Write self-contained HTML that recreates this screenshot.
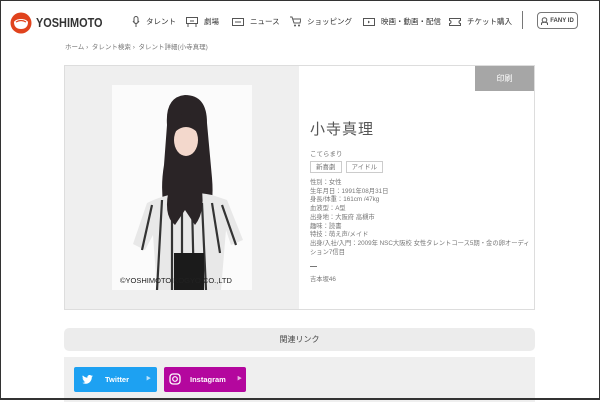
<!DOCTYPE html><html><head><meta charset="utf-8"><style>
*{margin:0;padding:0;box-sizing:border-box}
body{width:600px;height:400px;overflow:hidden;background:#fff;font-family:"Liberation Sans","Noto Sans CJK JP",sans-serif;color:#333;position:relative}
.frame{position:absolute;inset:0;border:1px solid #333;border-bottom:2px solid #333;z-index:9;pointer-events:none}
.a{position:absolute}
.nav{font-size:7.5px;color:#333;display:flex;align-items:center;gap:3px}
.nav svg{margin-right:3px}
.bc{font-size:6.5px;color:#777}
.tag{border:1px solid #ccc;font-size:6.5px;color:#777;padding:0 5px;height:12px;line-height:11px;display:inline-block;margin-right:4px;vertical-align:top}
.info{font-size:6.3px;color:#777;line-height:8.7px}
</style></head><body>
<div class="frame"></div>
<svg class="a" style="left:10px;top:12px" width="22" height="22" viewBox="0 0 22 22"><circle cx="11" cy="11" r="10.5" fill="#e0431d"/><path d="M4 10c2-4 12-4 14 0 0 5-3 7-7 7s-7-2-7-7z" fill="#fff"/><path d="M6 10q5-3 10 0" stroke="#e0431d" stroke-width="1.3" fill="none"/></svg>
<div class="a" style="left:36px;top:15px;font-size:13px;font-weight:bold;color:#333;transform:scaleX(0.84);transform-origin:left top">YOSHIMOTO</div>
<div class="a nav" style="left:132px;top:16px"><svg width="8" height="11"><rect x="2" y="0.5" width="4" height="7" rx="2" fill="none" stroke="#555"/><path d="M1 5q3 5 6 0M4 8v3" stroke="#555" fill="none"/></svg>タレント</div>
<div class="a nav" style="left:186px;top:16px"><svg width="12" height="10"><rect x="0.5" y="0.5" width="11" height="6" fill="none" stroke="#555"/><path d="M2 7v3M10 7v3M4 4h4" stroke="#555"/></svg>劇場</div>
<div class="a nav" style="left:232px;top:16px"><svg width="12" height="10"><rect x="0.5" y="1.5" width="11" height="7" fill="none" stroke="#555"/><path d="M3 5h6" stroke="#555"/></svg>ニュース</div>
<div class="a nav" style="left:290px;top:16px"><svg width="11" height="11"><path d="M0 1h2l2 6h6l1-4H3" stroke="#555" fill="none"/><circle cx="5" cy="9.5" r="1" fill="#555"/><circle cx="9" cy="9.5" r="1" fill="#555"/></svg>ショッピング</div>
<div class="a nav" style="left:363px;top:16px"><svg width="12" height="10"><rect x="0.5" y="1.5" width="11" height="7" fill="none" stroke="#555"/><path d="M5 3.5l2 1.5-2 1.5z" fill="#555"/></svg>映画・動画・配信</div>
<div class="a nav" style="left:449px;top:16px"><svg width="12" height="10"><path d="M0.5 1.5h11v2a1.5 1.5 0 0 0 0 3v2h-11v-2a1.5 1.5 0 0 0 0-3z" fill="none" stroke="#555"/></svg>チケット購入</div>
<div class="a" style="left:522px;top:11px;width:1px;height:18px;background:#777"></div>
<div class="a" style="left:537px;top:12px;width:41px;height:17px;border:1px solid #777;border-radius:4px;font-size:6px;font-weight:bold;color:#444;display:flex;align-items:center;justify-content:center;gap:2px"><svg width="7" height="8"><circle cx="3.5" cy="3" r="2.3" fill="none" stroke="#555"/><path d="M0.5 8v-2l3-1 3 1v2" stroke="#555" fill="none"/></svg>FANY ID</div>
<div class="a bc" style="left:65px;top:41px">ホーム ›&nbsp; タレント検索 ›&nbsp; タレント詳細(小寺真理)</div>
<div class="a" style="left:64px;top:65px;width:471px;height:245px;border:1px solid #ddd;background:#fff"></div>
<div class="a" style="left:65px;top:66px;width:234px;height:243px;background:#efefef"></div>
<svg class="a" style="left:112px;top:85px" width="140" height="205" viewBox="0 0 140 205">
<rect width="140" height="205" fill="#fbfbfb"/>
<path d="M55 40q-2-28 18-30q22 0 22 28l5 55q3 35-10 45l-35-3q-8-25-3-55z" fill="#2a2426"/>
<ellipse cx="74" cy="55" rx="12" ry="16" fill="#f3d8cc"/>
<path d="M60 50q14-16 28 0q-2-20-14-22q-12 2-14 22z" fill="#2a2426"/>
<path d="M35 118q30-15 65-8l15 5 16 40-12 5-5-15-5 60H45l-4-55-8 15-12-6z" fill="#e8e8e8"/>
<g stroke="#333" stroke-width="2.2"><path d="M40 120l-10 45M50 115l-5 90M60 116l0 89M70 117l0 88M80 118l2 87M90 118l4 87M100 118l8 50M110 120l14 40"/></g>
<path d="M58 100q-8 30 5 40l10-15 10 15q12-15 5-45z" fill="#2a2426"/>
<rect x="62" y="168" width="30" height="37" fill="#1b1b1b"/>
<text x="8" y="198" font-size="7.5" fill="#222" font-family="Liberation Sans,sans-serif">©YOSHIMOTO KOGYO CO.,LTD</text>
</svg>
<div class="a" style="left:475px;top:66px;width:59px;height:25px;background:#a6a6a6;color:#fff;font-size:8px;display:flex;align-items:center;justify-content:center">印刷</div>
<div class="a" style="left:310px;top:118px;font-size:15px;color:#555;letter-spacing:1px">小寺真理</div>
<div class="a" style="left:310px;top:148px;font-size:6.5px;color:#777">こてらまり</div>
<div class="a" style="left:310px;top:161px"><span class="tag">新喜劇</span><span class="tag">アイドル</span></div>
<div class="a info" style="left:310px;top:179px;width:220px">性別：女性<br>生年月日：1991年08月31日<br>身長/体重：161cm /47kg<br>血液型：A型<br>出身地：大阪府 高槻市<br>趣味：読書<br>特技：萌え声/メイド<br>出身/入社/入門：2009年 NSC大阪校 女性タレントコース5期・金の卵オーディション7信目</div>
<div class="a" style="left:310px;top:266px;width:7px;height:1px;background:#777"></div>
<div class="a info" style="left:310px;top:276px">吉本坂46</div>
<div class="a" style="left:64px;top:328px;width:471px;height:23px;background:#ececec;border-radius:5px;font-size:8px;color:#444;display:flex;align-items:center;justify-content:center">関連リンク</div>
<div class="a" style="left:64px;top:357px;width:471px;height:45px;background:#efefef"></div>
<div class="a" style="left:74px;top:367px;width:83px;height:25px;background:#1da1f2;border-radius:2px;color:#fff;font-size:7.5px;font-weight:bold">
<svg class="a" style="left:8px;top:8px" width="11" height="9" viewBox="0 0 24 20"><path d="M24 2.4a10 10 0 0 1-2.8.8A5 5 0 0 0 23.3.4a10 10 0 0 1-3.1 1.2A4.9 4.9 0 0 0 11.8 6 14 14 0 0 1 1.7.9a4.9 4.9 0 0 0 1.5 6.6A5 5 0 0 1 1 6.9a4.9 4.9 0 0 0 3.9 4.9 5 5 0 0 1-2.2.1 4.9 4.9 0 0 0 4.6 3.4A9.9 9.9 0 0 1 0 17.3 14 14 0 0 0 7.5 19.5c9.1 0 14-7.5 14-14v-.6A10 10 0 0 0 24 2.4z" fill="#fff"/></svg>
<span class="a" style="left:31px;top:8px">Twitter</span><span class="a" style="left:72px;top:8px;font-size:5px;opacity:.7">▶</span></div>
<div class="a" style="left:164px;top:367px;width:82px;height:25px;background:#b4079e;border-radius:2px;color:#fff;font-size:7.5px;font-weight:bold">
<svg class="a" style="left:5px;top:6px" width="12" height="12"><rect x="1" y="1" width="10" height="10" rx="3" fill="none" stroke="#fff" stroke-width="1.3"/><circle cx="6" cy="6" r="2.3" fill="none" stroke="#fff" stroke-width="1.2"/></svg>
<span class="a" style="left:26px;top:8px">Instagram</span><span class="a" style="left:73px;top:8px;font-size:5px;opacity:.7">▶</span></div>
</body></html>
